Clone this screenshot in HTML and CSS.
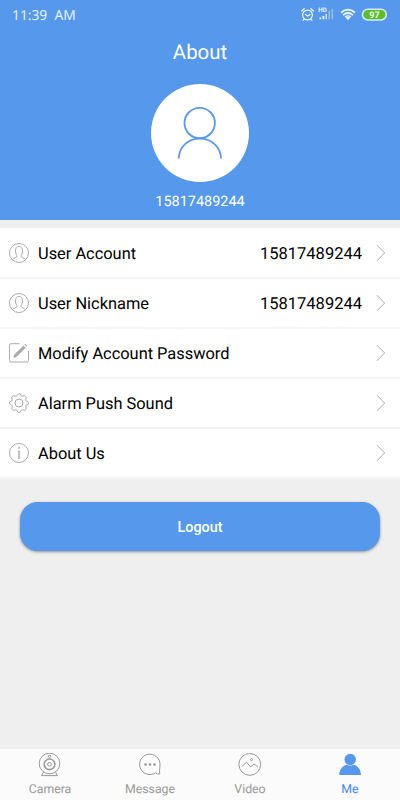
FILE: index.html
```
<!DOCTYPE html>
<html lang="en">
<head>
<meta charset="utf-8">
<title>About</title>
<link rel="stylesheet" href="styles.css">
</head>
<body>
<svg class="defs" aria-hidden="true">
  <symbol id="user" viewBox="0 0 20 20"><circle cx="10" cy="10" r="9.5"/><path d="M3.4 16.7C4.2 15 8 14.8 8 13.2c0-1-1.500-2-1.500-5.200C6.500 5 7.700 3.300 10 3.300S13.500 5 13.500 8c0 3.200-1.500 4.200-1.500 5.200 0 1.600 3.800 1.800 4.600 3.500"/></symbol>
  <symbol id="chevron" viewBox="0 0 10 18"><path d="M1 1.200 8.600 9 1 16.800"/></symbol>
</svg>
<div class="app">
  <header class="header">
    <div class="status">
      <span class="time">11:39&nbsp; AM</span>
      <svg class="status-icons" viewBox="0 0 88 16">
        <g fill="none" stroke="#fff" stroke-width="1.200" stroke-linecap="round">
          <circle cx="7.500" cy="8" r="4.900"/><path d="M5.400 7.400l2.100 1.700L10 7.400M1.600 4l2.600-2.300M13.400 4l-2.600-2.300M4 12.400l-1 1M11 12.400l1 1"/>
        </g>
        <g fill="#fff">
          <text class="hd" x="18.300" y="5.300">HD</text>
          <path d="M19.500 10.500h1.800v1.800h-1.800zM22.500 9h1.800v3.300h-1.800z"/>
          <path opacity=".8" d="M25.500 7h1.500v5.300h-1.500z"/><path opacity=".4" d="M28.500 4H30v8.300h-1.500zM31.500 2H33v10.300h-1.500z"/>
          <path d="M48 13.300l-2.300-2.700q2.300-1.800 4.600 0z"/>
        </g>
        <g fill="none" stroke="#fff" stroke-width="1.700"><path d="M41 5.600q7-6 14 0M43 8.100q5-4.200 10 0"/><path d="M45 10.100q3-2.500 6 0" stroke-width="1.300"/></g>
        <rect x="62.500" y="2.200" width="23.800" height="10.800" rx="5.400" fill="#5ac313" stroke="#e4effb" stroke-width="1.600"/>
        <text class="battery" x="74.500" y="10.800">97</text>
      </svg>
    </div>
    <h1 class="title">About</h1>
    <div class="avatar"><svg viewBox="0 0 98 98"><circle cx="48.700" cy="39" r="15.200"/><path d="M27.700 74.500C28.300 62.500 37 54.600 48.700 54.600S69.500 62.500 70.100 74.500"/></svg></div>
    <div class="phone">15817489244</div>
  </header>
  <main class="content">
    <section class="list">
      <div class="row"><svg class="icon"><use href="#user"/></svg><span class="label">User Account</span><span class="value">15817489244</span><svg class="chevron"><use href="#chevron"/></svg></div>
      <div class="row"><svg class="icon"><use href="#user"/></svg><span class="label">User Nickname</span><span class="value">15817489244</span><svg class="chevron"><use href="#chevron"/></svg></div>
      <div class="row"><svg class="icon" viewBox="0 0 20 20"><path d="M10.500.700H2Q.500.700.500 2.200V17.500Q.500 19 2 19H18Q19.500 19 19.500 17.500V8"/><path class="pencil" d="M5.200 11.800 14.500 2.500l2.200 2.200-9.300 9.300-3.100.9zM15.400 1.600l.9-.9 2.200 2.200-.9.900z"/></svg><span class="label">Modify Account Password</span><svg class="chevron"><use href="#chevron"/></svg></div>
      <div class="row"><svg class="icon" viewBox="0 0 20 20"><circle cx="10" cy="10" r="4"/><path d="M8.100 2.600Q9.100.4 11 .7L12 2.900Q13.200 3.500 14 3.100L15.900 2.600 17.400 4.200 16.700 6.300Q16.700 7.300 17.300 8.100L19.400 9.100V11.200L17.300 12Q16.600 12.800 16.900 13.800L17.300 16 15.800 17.400 13.700 16.700Q12.700 16.700 11.900 17.400L10.900 19.400H8.900L8 17.300Q7.200 16.600 6.200 16.900L4 17.300 2.600 15.800 3.300 13.700Q3.300 12.700 2.600 11.900L.6 10.900V8.900L2.700 8Q3.400 7.200 3.100 6.200L2.700 4 4.200 2.600 6.300 3.300Q7.300 3.300 8.100 2.600Z"/></svg><span class="label">Alarm Push Sound</span><svg class="chevron"><use href="#chevron"/></svg></div>
      <div class="row"><svg class="icon" viewBox="0 0 20 20"><circle cx="10" cy="10" r="9.500"/><path class="info" d="M10 7.500V16M10 4v1.800"/></svg><span class="label">About Us</span><svg class="chevron"><use href="#chevron"/></svg></div>
    </section>
    <button class="logout">Logout</button>
  </main>
  <nav class="tabs">
    <div class="tab"><svg viewBox="0 0 24 24"><circle cx="11.500" cy="10.500" r="10.300"/><circle cx="11.500" cy="11.300" r="5.300" stroke-width="1.600"/><circle cx="11.500" cy="11.300" r="1.900"/><circle cx="11.500" cy="3.300" r="1.200"/><path d="M5.500 19 3.500 22.600H19.500L17.500 19"/></svg><span>Camera</span></div>
    <div class="tab"><svg viewBox="0 0 24 24"><path d="M22 11.500A10.200 10.200 0 1 0 17.500 19.800Q19 21.300 21.800 21 21.400 19.500 21.600 16.500 22 14.300 22 11.500Z"/><g class="dots"><circle cx="7.500" cy="11.500" r="1.300"/><circle cx="12" cy="11.500" r="1.300"/><circle cx="16.500" cy="11.500" r="1.300"/></g></svg><span>Message</span></div>
    <div class="tab"><svg viewBox="0 0 24 24"><circle cx="11.800" cy="11.400" r="10.900"/><circle cx="13.500" cy="6.600" r="1"/><path d="M3.800 13.600 8.500 9.100 12.500 13.900 16 10.900 20 14.100"/></svg><span>Video</span></div>
    <div class="tab active"><svg viewBox="0 0 24 24"><circle cx="12.200" cy="6.500" r="5.700"/><path d="M1.200 22C1.500 15.500 5.500 12.200 9 11.700Q12.200 13.500 15.400 11.700C19 12.200 22.700 15.500 23 22Z"/></svg><span>Me</span></div>
  </nav>
</div>
</body>
</html>
```
FILE: styles.css
```
* { box-sizing: border-box; }
body { margin: 0; background: #efefef; font-family: Roboto, "Noto Sans", sans-serif; text-rendering: geometricPrecision; }
svg { display: block; flex: none; }
.defs { position: absolute; width: 0; height: 0; }
.app { width: 400px; height: 800px; display: flex; flex-direction: column; overflow: hidden; }
.header { height: 220px; flex: none; background: #5598ec; color: #fff; display: flex; flex-direction: column; align-items: center; }
.status { width: 100%; height: 30px; padding: 0 12px; display: flex; justify-content: space-between; align-items: center; }
.time { padding-top: 2px; font: 13.800px/30px "Noto Sans", sans-serif; color: #e7f1fd; }
.status-icons { width: 88px; height: 16px; opacity: .92; }
.hd { font: bold 6.200px Roboto, sans-serif; }
.battery { font: bold 9px Roboto, sans-serif; fill: #fff; text-anchor: middle; }
.title { margin: 7px 0 0; font-size: 20.400px; line-height: 30px; font-weight: 400; }
.avatar { margin-top: 17px; width: 98px; height: 98px; border-radius: 50%; background: #fff; }
.avatar svg { width: 98px; height: 98px; fill: none; stroke: #5598ec; stroke-width: 1.800; }
.phone { margin-top: 10px; font-size: 14.450px; line-height: 20px; }
.content { flex: 1; padding-top: 8px; }
.list { padding-top: 1px; background: #fff; }
.row { height: 50px; border-bottom: 2px solid #f4f4f4; padding: 0 14px 0 9px; display: flex; align-items: center; }
.icon { width: 20px; height: 20px; fill: none; stroke: #aaa; stroke-width: 1; }
.icon .pencil { fill: #aaa; stroke: none; }
.icon .info { stroke-width: 1.500; }
.label, .value { padding-top: 4px; font-size: 16.400px; line-height: 24px; color: #000; }
.label { margin-left: 9px; flex: 1; }
.value { margin-right: 14px; font-size: 16.500px; }
.chevron { width: 10px; height: 18px; fill: none; stroke: #aaa; stroke-width: 1; }
.logout { display: block; width: 360px; height: 49px; margin: 23px 20px 0; padding: 2px 0 0; border: 0; border-radius: 18px; background: #5598ec; color: #fff; font: 500 14.400px Roboto, sans-serif; box-shadow: 0 1px 3px rgba(0,0,0,.4); }
.tabs { height: 51px; flex: none; background: #fbfbfb; display: grid; grid-template-columns: repeat(4, 1fr); }
.tab { padding-top: 4px; display: flex; flex-direction: column; align-items: center; color: #999; }
.tab svg { width: 24px; height: 24px; fill: none; stroke: #999; stroke-width: 1; }
.tab .dots { fill: #999; stroke: none; }
.tab span { font-size: 12.300px; line-height: 16px; margin-top: 5px; }
.tab.active { color: #3c86f5; }
.tab.active svg { fill: #5598ec; stroke: none; }
```
